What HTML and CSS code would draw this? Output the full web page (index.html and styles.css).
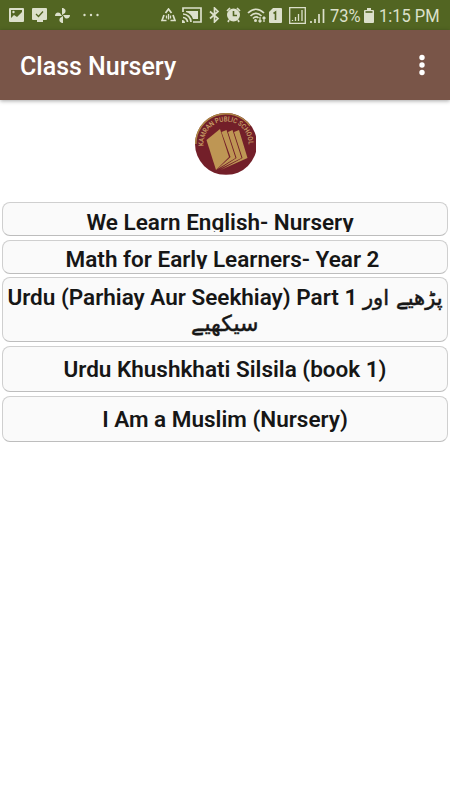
FILE: index.html
```html
<!DOCTYPE html>
<html lang="en">
<head>
    <meta charset="UTF-8">
    <meta name="viewport" content="width=device-width, initial-scale=1.0">
    <title>Class Nursery</title>
    <link rel="stylesheet" href="styles.css">
</head>
<body>
    <div class="status-bar">
        <div class="status-left">
            <svg width="15" height="14" viewBox="0 0 15 14"><path fill-rule="evenodd" d="M1 0h13a1 1 0 0 1 1 1v12a1 1 0 0 1-1 1H1a1 1 0 0 1-1-1V1a1 1 0 0 1 1-1zM2 2v8l3-3 3 2 5-5V2z"/><circle cx="4.500" cy="4" r="1.200"/></svg>
            <svg width="15" height="14" viewBox="0 0 15 14"><path d="M1 0h13a1 1 0 0 1 1 1v10a1 1 0 0 1-1 1h-3v2H5v-2H1a1 1 0 0 1-1-1V1a1 1 0 0 1 1-1z"/><path class="cut thin" d="M4 6l2.500 2.500L11 3.500"/></svg>
            <svg width="15" height="15" viewBox="0 0 15 15"><path d="M7 7V0c3 0 4.500 2.500 3 5zM8 7h7c0 3-2.500 4.500-5 3zM8 8v7c-3 0-4.500-2.500-3-5zM7 8H0c0-3 2.500-4.500 5-3z"/></svg>
            <svg class="more" width="16" height="4" viewBox="0 0 16 4"><circle cx="1.500" cy="2" r="1.200"/><circle cx="8" cy="2" r="1.200"/><circle cx="14.500" cy="2" r="1.200"/></svg>
        </div>
        <div class="status-right">
            <svg width="15" height="14" viewBox="0 0 15 14"><path class="line" d="M4.500 5L7.500 1l3 4M12 7l2 5.500H9.500M5.500 12.500H1L3 7"/><path class="line thin" d="M5.500 7.500v3M7.500 6v5.500M9.500 7.500v3"/></svg>
            <svg class="cast" width="20" height="16" viewBox="0 0 20 16"><path class="line" d="M1 5V1h18v14h-8M1 7a8 8 0 0 1 8 8M1 10.500A4.500 4.500 0 0 1 5.500 15"/><path d="M4 4h12v8h-5C9.500 8 7.500 6 4 5zM0 13a3 3 0 0 1 3 3H0z"/></svg>
            <svg class="bluetooth" width="11" height="16" viewBox="0 0 11 16"><path class="line" d="M1 4.500l8 7L5.500 15V1L9 4.500l-8 7"/></svg>
            <svg class="alarm" width="15" height="16" viewBox="0 0 15 16"><circle cx="7.500" cy="8" r="6.500"/><path class="line" d="M1 4l3-3M14 4l-3-3M3 13l-1 2M12 13l1 2"/><path class="cut" d="M7.500 4v4.500H11"/></svg>
            <svg class="wifi" width="20" height="15" viewBox="0 0 20 15"><path class="line" d="M1 5c5-5 11-5 16 0M3.500 8c3.500-3.500 7.500-3.500 11 0M6 10.500c2-2 4-2 5.500-.5"/><circle cx="8.500" cy="12.500" r="1.500"/><path class="line thin" d="M13 9v5M11.500 12.500L13 14l1.500-1.500M17 14V9M15.500 10.500L17 9l1.500 1.500"/></svg>
            <svg class="sim" width="13" height="15" viewBox="0 0 13 15"><path d="M4 0h8a1 1 0 0 1 1 1v13a1 1 0 0 1-1 1H1a1 1 0 0 1-1-1V4z"/><path class="cut" d="M4.500 5.500l2-1.500v8"/></svg>
            <svg class="signal-box" width="17" height="17" viewBox="0 0 17 17"><path class="line thin" d="M.7.700h15.600v15.600H.7z"/><path class="line thin" d="M3.500 14v-1M6.500 14v-4M9.500 14V7M13 14V3"/></svg>
            <svg class="signal" width="15" height="15" viewBox="0 0 15 15"><path class="line" d="M1 15v-2M5 15v-4M9 15V6"/><path class="line" d="M13.500 15V1"/></svg>
            <span class="percent">73%</span>
            <svg class="battery" width="10" height="15" viewBox="0 0 10 15"><path d="M3 0h4v2h2a1 1 0 0 1 1 1v11a1 1 0 0 1-1 1H1a1 1 0 0 1-1-1V3a1 1 0 0 1 1-1h2z"/><path class="cut" d="M1.500 4h7"/></svg>
            <span class="time">1:15 PM</span>
        </div>
    </div>

    <div class="toolbar">
        <h1>Class Nursery</h1>
        <svg width="6" height="22" viewBox="0 0 6 22"><circle cx="3" cy="3.500" r="2.700"/><circle cx="3" cy="11" r="2.700"/><circle cx="3" cy="18.500" r="2.700"/></svg>
    </div>

    <div class="logo">
        <svg width="64" height="64" viewBox="0 0 64 64">
            <defs>
                <path id="arc" d="M9.700 34A22.500 22.500 0 1 1 54 37"/>
                <clipPath id="edge"><rect x="0" y="0" width="62" height="62.700"/></clipPath>
            </defs>
            <g clip-path="url(#edge)">
                <circle cx="32" cy="32" r="31" fill="#731f29"/>
                <path d="M1.800 32A30 30 0 0 1 56 14" fill="none" stroke="#ad8746" stroke-width="1.500"/>
                <text class="logo-text" textLength="73" lengthAdjust="spacingAndGlyphs"><textPath href="#arc" textLength="73" lengthAdjust="spacingAndGlyphs">KAMRAN PUBLIC SCHOOL</textPath></text>
                <g fill="#be9654">
                    <path d="M12.500 28L26 17l9 28-13 13z"/>
                    <path d="M27.500 20l5-2 9 28-18 11 13-12z"/>
                    <path d="M34 20l4.500-2 9 28-22 11 17-11z"/>
                    <path d="M40 20l5-2 8.500 28-27 12 22-12z"/>
                </g>
            </g>
        </svg>
    </div>

    <div class="books">
        <div class="book small first"><p>We Learn English- Nursery</p></div>
        <div class="book small second"><p>Math for Early Learners- Year 2</p></div>
        <div class="book tall"><p>Urdu (Parhiay Aur Seekhiay) Part 1 <span lang="ur">پڑھیے اور <span class="last-word">سیکھیے</span></span></p></div>
        <div class="book"><p>Urdu Khushkhati Silsila (book 1)</p></div>
        <div class="book"><p>I Am a Muslim (Nursery)</p></div>
    </div>
</body>
</html>
```
FILE: styles.css
```css
* {
    box-sizing: border-box;
}
body {
    font-family: Roboto, "Noto Sans", sans-serif;
    background: #fff;
    margin: 0;
    padding: 0;
}
svg {
    display: block;
    flex-shrink: 0;
}
.status-bar {
    height: 30px;
    padding: 0 10px 0 9px;
    background: #526522;
    color: #dce0cb;
    display: flex;
    align-items: center;
    justify-content: space-between;
}
.status-bar svg {
    fill: #dce0cb;
}
.status-left, .status-right {
    display: flex;
    align-items: center;
}
.status-left {
    gap: 8px;
}
.status-left .more {
    margin-left: 5px;
}
.line {
    fill: none;
    stroke: #dce0cb;
    stroke-width: 1.7;
}
.cut {
    fill: none;
    stroke: #526522;
    stroke-width: 1.6;
}
.thin {
    stroke-width: 1.3;
}
.cast {
    margin-left: 6px;
}
.bluetooth {
    margin-left: 7px;
}
.alarm {
    margin-left: 6px;
}
.wifi {
    margin-left: 6px;
}
.sim {
    margin-left: 2px;
}
.signal-box {
    margin-left: 7px;
}
.signal {
    margin-left: 4px;
}
.percent, .time {
    font-size: 18.5px;
    line-height: 30px;
    white-space: nowrap;
    padding-top: 2px;
    transform: scaleX(0.89);
    transform-origin: left;
}
.percent {
    width: 30px;
    margin-left: 5px;
}
.battery {
    margin-left: 4px;
}
.time {
    width: 61px;
    margin-left: 5px;
}
.toolbar {
    height: 70px;
    padding: 0 25px 0 20px;
    background: #795548;
    display: flex;
    align-items: center;
    justify-content: space-between;
    box-shadow: 0 1px 4px rgba(0, 0, 0, 0.35);
}
.toolbar h1 {
    margin: 2px 0 0;
    font-size: 25px;
    font-weight: 500;
    color: #fff;
}
.toolbar svg {
    fill: #fff;
}
.logo {
    height: 102px;
    padding: 12px 0 0 1px;
    display: flex;
    justify-content: center;
}
.logo-text {
    font-size: 7px;
    font-weight: 500;
    fill: #c9a267;
}
.books {
    padding: 0 2px;
    display: flex;
    flex-direction: column;
    gap: 3.5px;
}
.book {
    height: 46px;
    padding: 9px 2px;
    background: #fafafa;
    border: 1px solid #cfcfcf;
    border-bottom-color: #bdbdbd;
    border-radius: 8px;
}
.book p {
    margin: 0;
    font-size: 22.5px;
    font-weight: 600;
    line-height: 26px;
    text-align: center;
    color: #161616;
}
.book:last-child {
    margin-top: 0.5px;
}
.book.small {
    height: 34px;
    padding-top: 6px;
}
.book.small p {
    height: 23px;
    overflow: hidden;
}
.book.first {
    padding-right: 12px;
}
.book.second {
    padding-top: 5px;
    padding-right: 7px;
}
.book.tall {
    height: 65px;
    padding-top: 6px;
}
.book span {
    font-family: "DejaVu Sans", sans-serif;
    font-size: 21px;
    font-weight: 400;
    line-height: 20px;
    -webkit-text-stroke: 0.5px #161616;
}
.book .last-word {
    font-size: 22px;
}
```
